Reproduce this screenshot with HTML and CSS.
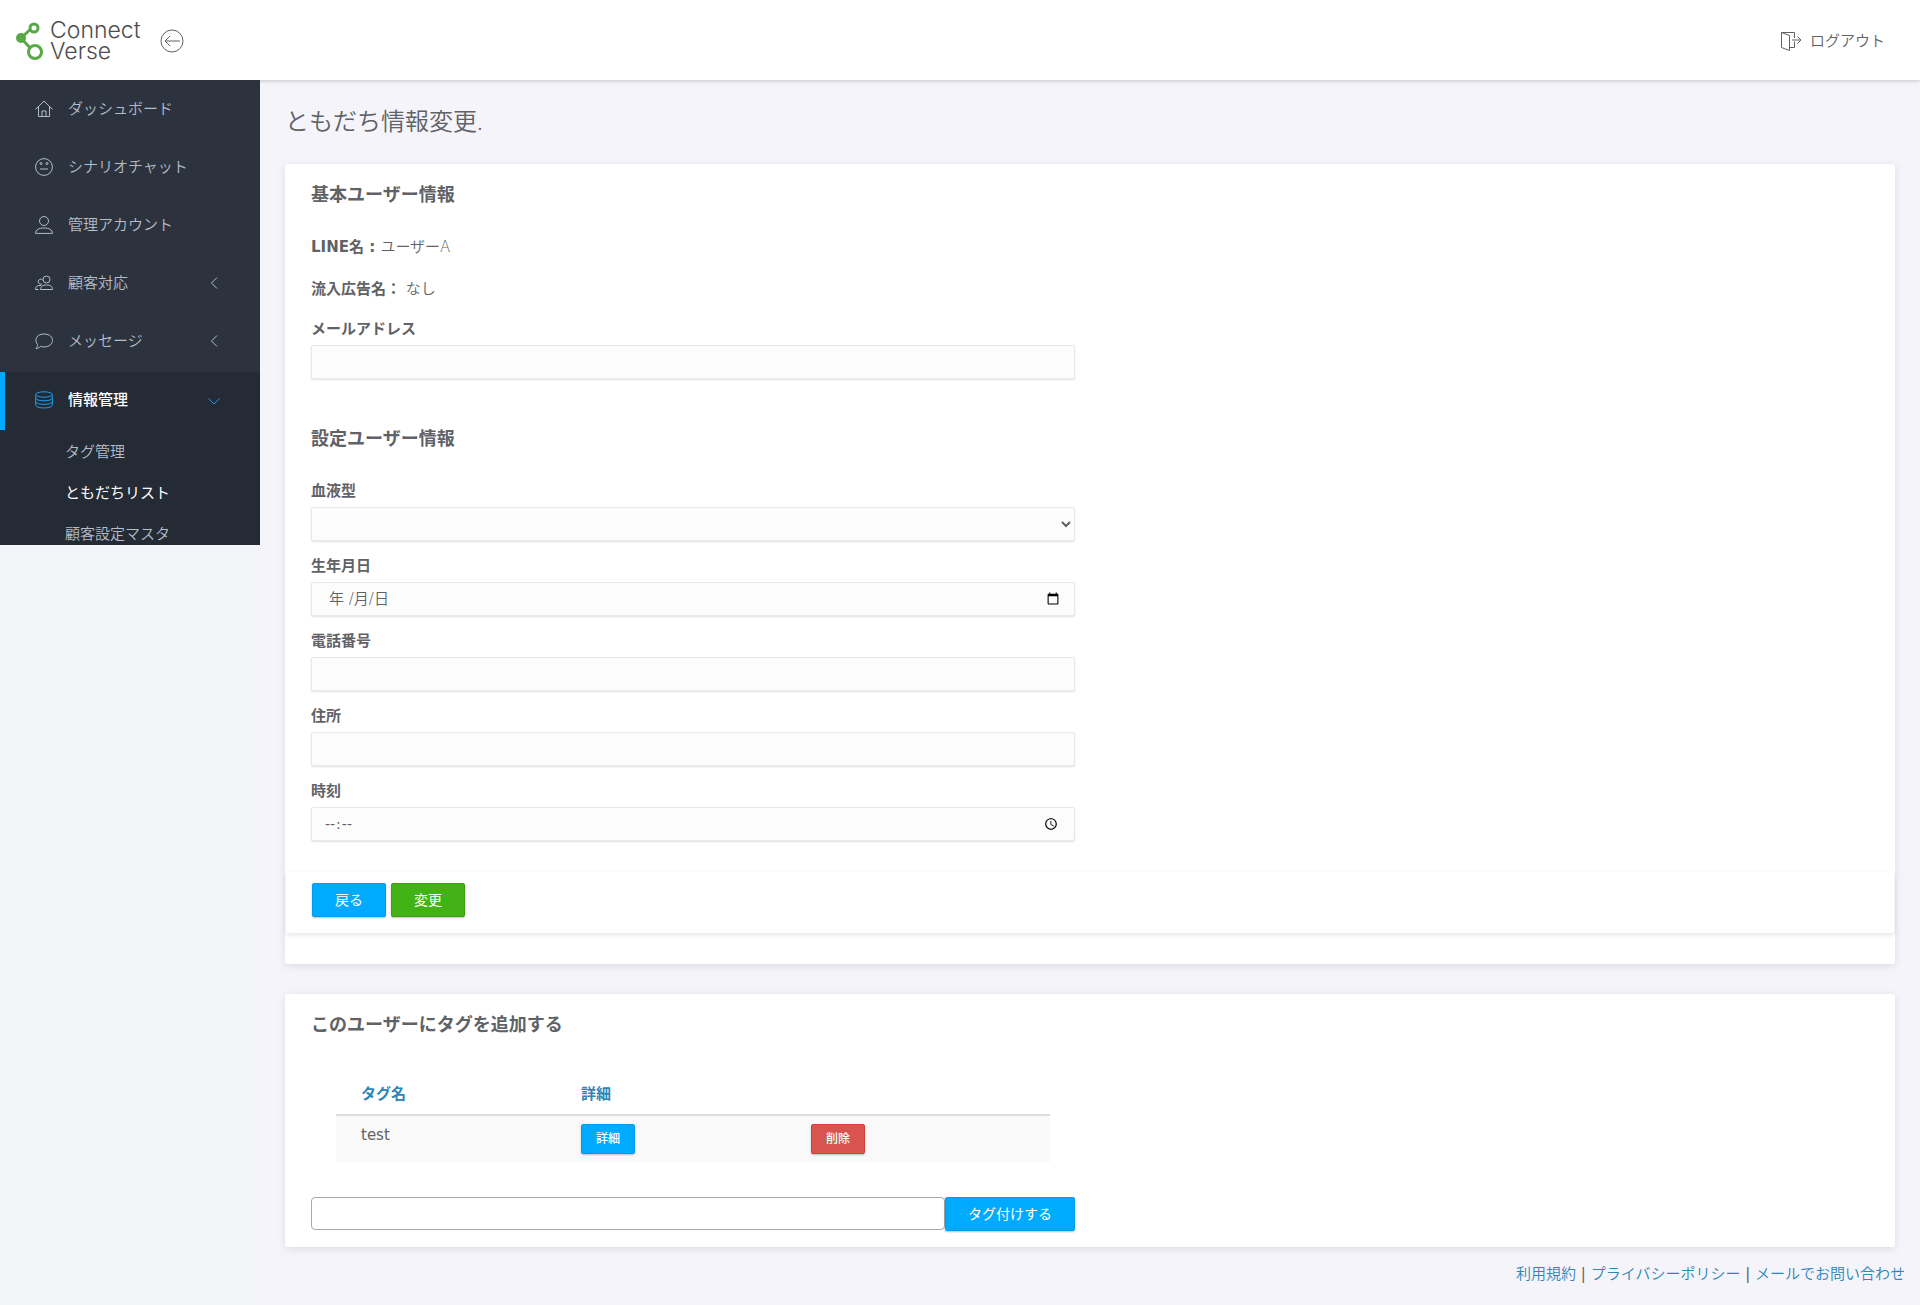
FILE: index.html
```html
<!DOCTYPE html>
<html lang="ja">
<head>
<meta charset="utf-8">
<meta name="viewport" content="width=device-width, initial-scale=1">
<title>ともだち情報変更 | Connect Verse</title>
<link rel="stylesheet" href="styles.css">
</head>
<body>
<header class="topbar">
  <a class="brand" href="#">
    <svg class="brand-mark" viewBox="0 0 28 40" aria-hidden="true">
      <path d="M5 17 L17 6 M5 17 L17 30" stroke-width="3"/>
      <circle cx="5" cy="17" r="5" fill="currentColor" stroke="none"/>
      <circle cx="18" cy="7" r="4" fill="#fff" stroke-width="3"/>
      <circle cx="19" cy="31" r="6.500" fill="#fff" stroke-width="3"/>
    </svg>
    <span class="brand-name"><span>Connect</span><span>Verse</span></span>
  </a>
  <button class="menu-toggle" type="button" aria-label="メニューを閉じる">
    <svg viewBox="0 0 24 24" aria-hidden="true"><circle cx="12" cy="12" r="11"/><path d="M20 12H5M10 7l-5 5 5 5"/></svg>
  </button>
  <a class="logout" href="#">
    <svg viewBox="0 0 22 20" aria-hidden="true"><path d="M1.500 1.500l8 3v15l-8-3zM1.500 1.500h13v5.500M9.500 16.500h5v-6M12 9h9M17.500 5.500L21 9l-3.500 3.500"/></svg>
    ログアウト
  </a>
</header>
<div class="layout">
  <aside class="sidebar">
    <nav class="menu">
      <ul class="menu-list">
        <li><a class="menu-item" href="#"><svg class="icon" viewBox="0 0 18 18"><path d="M.5 9.500L9 1l8.500 8.500M3.500 7v9.500h11V7M7 16.500V11h4v5.500"/></svg>ダッシュボード</a></li>
        <li><a class="menu-item" href="#"><svg class="icon" viewBox="0 0 18 18"><circle cx="9" cy="9" r="8.400"/><path d="M5 11h8"/><circle cx="6" cy="5.500" r="1"/><circle cx="12" cy="5.500" r="1"/></svg>シナリオチャット</a></li>
        <li><a class="menu-item" href="#"><svg class="icon" viewBox="0 0 18 18"><ellipse cx="9" cy="5" rx="4.500" ry="4.500"/><path d="M.6 17.400C.6 13.500 4 12 9 12s8.400 1.500 8.400 5.400z"/></svg>管理アカウント</a></li>
        <li><a class="menu-item" href="#"><svg class="icon" viewBox="0 0 18 18"><circle cx="11.500" cy="5.500" r="3.500"/><path d="M5.500 15.500c0-3.500 2.500-4.500 6-4.500s6 1 6 4.500z"/><path d="M7 10a2.600 2.600 0 1 1 .8-4M6 11.500c-3.500-.3-5.500 1-5.500 4h3"/></svg>顧客対応<svg class="arrow" viewBox="0 0 12 12"><path d="M9 .5L3.500 6 9 11.500"/></svg></a></li>
        <li><a class="menu-item" href="#"><svg class="icon" viewBox="0 0 18 18"><path d="M2.500 12.500C-1.500 7 2.500 2 9 2s8.500 3.500 8.500 6.500S14.500 15 9 15c-1.500 0-2.500-.3-3.500-.7C4.500 15.700 3 16.400 1 16.500c1-1.300 1.600-2.500 1.500-4z"/></svg>メッセージ<svg class="arrow" viewBox="0 0 12 12"><path d="M9 .5L3.500 6 9 11.500"/></svg></a></li>
      </ul>
      <div class="menu-group">
        <a class="menu-item menu-item-active" href="#"><svg class="icon" viewBox="0 0 18 18"><ellipse cx="9" cy="3.500" rx="8.300" ry="2.700"/><path d="M.7 3.500v10.700c0 3.700 16.600 3.700 16.600 0V3.500M.7 7.200c0 3.400 16.600 3.400 16.600 0M.7 10.800c0 3.400 16.600 3.400 16.600 0"/></svg>情報管理<svg class="arrow" viewBox="0 0 12 12"><path d="M.5 4.500L6 10l5.500-5.500"/></svg></a>
        <ul class="submenu">
          <li><a href="#">タグ管理</a></li>
          <li><a class="current" href="#">ともだちリスト</a></li>
          <li><a href="#">顧客設定マスタ</a></li>
        </ul>
      </div>
    </nav>
  </aside>
  <main class="content">
    <h1 class="page-title">ともだち情報変更.</h1>
    <form class="card">
      <section class="card-body">
        <h2 class="card-title">基本ユーザー情報</h2>
        <p class="info"><b>LINE名 : </b>ユーザーA</p>
        <p class="info"><b>流入広告名：</b> なし</p>
        <div class="field">
          <label for="mail">メールアドレス</label>
          <input class="control" id="mail" type="email">
        </div>
        <h2 class="card-title card-title-second">設定ユーザー情報</h2>
        <div class="field">
          <label for="blood">血液型</label>
          <select class="control control-select" id="blood"><option></option></select>
        </div>
        <div class="field">
          <label for="birth">生年月日</label>
          <div class="date-box">
            <input class="control control-date" id="birth" type="date">
            <span class="date-hint">年 /月/日</span>
          </div>
        </div>
        <div class="field">
          <label for="tel">電話番号</label>
          <input class="control" id="tel" type="tel">
        </div>
        <div class="field">
          <label for="address">住所</label>
          <input class="control" id="address" type="text">
        </div>
        <div class="field">
          <label for="time">時刻</label>
          <input class="control control-time" id="time" type="time">
        </div>
      </section>
      <div class="card-actions">
        <button class="btn btn-blue" type="button">戻る</button>
        <button class="btn btn-green" type="submit">変更</button>
      </div>
    </form>
    <section class="card card-tags">
      <h2 class="card-title">このユーザーにタグを追加する</h2>
      <div class="tag-area">
        <table class="tag-table">
          <thead><tr><th class="col-name">タグ名</th><th class="col-detail">詳細</th><th></th></tr></thead>
          <tbody><tr>
            <td>test</td>
            <td><button class="btn btn-small btn-blue" type="button">詳細</button></td>
            <td><button class="btn btn-small btn-red" type="button">削除</button></td>
          </tr></tbody>
        </table>
        <form class="tag-form">
          <input class="tag-input" type="text" aria-label="タグ">
          <button class="btn btn-blue" type="submit">タグ付けする</button>
        </form>
      </div>
    </section>
    <footer class="footer">
      <a href="#">利用規約</a> | <a href="#">プライバシーポリシー</a> | <a href="#">メールでお問い合わせ</a>
    </footer>
  </main>
</div>
</body>
</html>
```
FILE: styles.css
```css
* {
  box-sizing: border-box;
}

body {
  margin: 0;
  min-height: 100vh;
  display: flex;
  flex-direction: column;
  background: #f4f4fa;
  color: #5f6266;
  font-family: "DejaVu Sans", "Noto Sans CJK JP", sans-serif;
  font-size: 15px;
  font-weight: 350;
  line-height: 22px;
}

a {
  color: #2f86b5;
  text-decoration: none;
}

ul {
  list-style: none;
  margin: 0;
  padding: 0;
}

svg {
  fill: none;
  stroke: currentColor;
  flex: none;
}

button,
input,
select {
  font: inherit;
  color: inherit;
}

/* Header */
.topbar {
  position: relative;
  height: 80px;
  display: flex;
  align-items: center;
  padding: 1px 35px 0 16px;
  background: #fff;
  box-shadow: 0 1px 4px rgba(0, 0, 0, 0.2);
}

.brand {
  display: flex;
  align-items: center;
  gap: 6px;
  color: #57aa46;
}

.brand-mark {
  width: 28px;
  height: 40px;
}

.brand-name {
  display: grid;
  color: #4d4d4d;
  font-family: Inter, sans-serif;
  font-size: 23px;
  font-weight: 300;
  line-height: 21px;
}

.menu-toggle {
  margin-left: 19px;
  padding: 0;
  border: 0;
  background: none;
  line-height: 0;
  color: #5f6266;
}

.menu-toggle svg {
  width: 24px;
  height: 24px;
}

.logout {
  margin-left: auto;
  display: flex;
  align-items: center;
  gap: 8px;
  color: #5f6266;
}

.logout svg {
  width: 22px;
  height: 20px;
}

/* Sidebar */
.layout {
  flex: 1;
  display: flex;
}

.sidebar {
  position: relative;
  flex: 0 0 260px;
  background: #f3f5f8;
}

.menu {
  background: #2c333e;
}

.menu-list {
  padding: 1px 0;
}

.menu-item {
  height: 58px;
  display: flex;
  align-items: center;
  padding: 0 40px 3px 35px;
  color: #b4bdc8;
}

.icon {
  width: 18px;
  height: 18px;
  margin-right: 15px;
}

.arrow {
  width: 12px;
  height: 12px;
  margin-left: auto;
}

.menu-group {
  background: #252b35;
}

.menu-item-active {
  padding-left: 30px;
  border-left: 5px solid #00aaff;
  color: #fff;
  font-weight: 500;
}

.menu-item-active svg {
  color: #1a9cf0;
}

.submenu {
  display: grid;
  gap: 19px;
  padding: 11px 0 0 65px;
}

.submenu a {
  color: #b4bdc8;
}

.submenu .current {
  color: #fff;
  font-weight: 400;
}

/* Content */
.content {
  flex: 1;
  min-width: 0;
  padding: 25px 25px 0;
}

.page-title {
  margin: 0 0 27px;
  font-family: "Noto Sans", "Noto Sans CJK JP", sans-serif;
  font-size: 24px;
  font-weight: 350;
  line-height: 32px;
}

.card {
  margin-bottom: 30px;
  padding-bottom: 31px;
  background: #fff;
  border-radius: 3px;
  box-shadow: 0 2px 8px rgba(0, 0, 0, 0.1);
}

.card-body {
  padding: 18px 26px 17px;
}

.card-title {
  margin: 0 0 28px;
  font-size: 18px;
  font-weight: 700;
  line-height: 26px;
}

.card-title-second {
  margin-top: 47px;
}

.info {
  margin: 0 0 20px;
}

.field {
  width: calc(50% - 15px);
  margin-bottom: 14px;
  display: grid;
  gap: 5px;
}

.info + .field {
  margin-top: -2px;
}

.field label {
  font-weight: 700;
}

.info b {
  font-weight: 700;
}

.control {
  width: 100%;
  height: 34px;
  padding: 0 12px;
  border: 1px solid #e9e9e9;
  border-radius: 2px;
  background: #fcfcfc;
  box-shadow: 0 1px 2px rgba(0, 0, 0, 0.12);
  font-size: 14px;
}

.control-select {
  padding: 0 4px;
}

.date-box {
  position: relative;
}

.control-date::-webkit-datetime-edit {
  opacity: 0;
}

.date-hint {
  position: absolute;
  top: 6px;
  left: 18px;
  font-size: 15px;
  pointer-events: none;
}

.control-time {
  font-weight: 400;
}

.control-time::-webkit-datetime-edit-ampm-field {
  display: none;
}

.card-actions {
  display: flex;
  gap: 5px;
  margin: 0 1px;
  padding: 11px 26px 16px;
  border-radius: 3px;
  box-shadow: 0 2px 5px rgba(0, 0, 0, 0.1);
}

/* Buttons */
.btn {
  height: 34px;
  padding: 0 22px;
  border: 1px solid;
  border-radius: 2px;
  box-shadow: 0 1px 2px rgba(0, 0, 0, 0.25);
  color: #fff;
  font-size: 14px;
  font-weight: 400;
  line-height: 20px;
  white-space: nowrap;
}

.btn-blue {
  background: #00aaff;
  border-color: #009dec;
}

.btn-green {
  background: #43b216;
  border-color: #3ca210;
}

.btn-red {
  background: #d9534f;
  border-color: #d43f3a;
}

.btn-small {
  height: 30px;
  padding: 0 14px;
  font-size: 12px;
  font-weight: 500;
  vertical-align: top;
}

/* Tags */
.card-tags {
  margin-bottom: 16px;
  padding: 18px 26px 16px;
}

.tag-area {
  width: calc(50% - 15px);
  padding-top: 6px;
}

.tag-table {
  width: calc(100% - 50px);
  margin: 0 25px 35px;
  table-layout: fixed;
  border-collapse: collapse;
}

.tag-table th {
  height: 43px;
  padding: 2px 0 0;
  border-bottom: 2px solid #ddd;
  color: #2f86b5;
  font-weight: 700;
  text-align: left;
}

.tag-table td {
  height: 47px;
  padding: 8px 0 0;
  background: #f9f9f9;
  vertical-align: top;
}

.tag-table th:first-child,
.tag-table td:first-child {
  padding-left: 25px;
}

.tag-table td:first-child {
  font-weight: 400;
}

.col-name {
  width: 245px;
}

.col-detail {
  width: 230px;
}

.tag-form {
  display: flex;
}

.tag-input {
  flex: 1;
  min-width: 0;
  height: 33px;
  padding: 0 12px;
  border: 1px solid #a9a9a9;
  border-radius: 4px;
}

.footer {
  padding-bottom: 20px;
  margin-right: -10px;
  text-align: right;
  font-weight: 400;
}

.footer a {
  font-weight: 350;
}
```
